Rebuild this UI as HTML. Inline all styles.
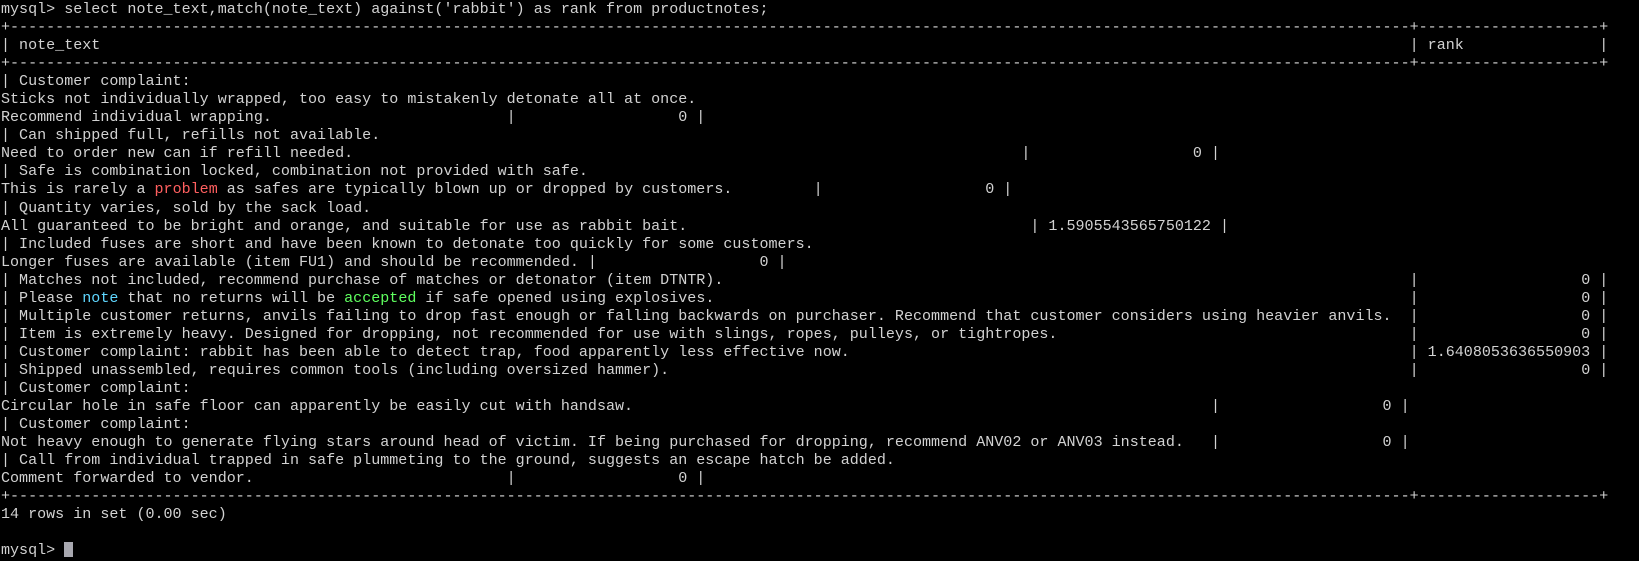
<!DOCTYPE html>
<html><head><meta charset="utf-8"><style>
html,body{margin:0;padding:0;background:#000;width:1639px;height:561px;overflow:hidden}
pre{position:absolute;left:1px;top:0px;margin:0;font-family:"Liberation Mono","DejaVu Sans Mono",monospace;font-size:15.05px;line-height:18.05px;color:#d2d2d2;white-space:pre}
.s{display:inline-block}
.r{color:#ff5f5f}.c{color:#5fd7ff}.g{color:#5fff5f}
.cur{display:inline-block;width:9px;height:15px;background:#a8a8b0;vertical-align:-3px}
</style></head><body><pre>mysql&gt; select note_text,match(note_text) against('rabbit') as rank from productnotes;
+-----------------------------------------------------------------------------------------------------------------------------------------------------------+--------------------+
| note_text<span class="s" style="width:144ch"></span> | rank<span class="s" style="width:14ch"></span> |
+-----------------------------------------------------------------------------------------------------------------------------------------------------------+--------------------+
| Customer complaint:
Sticks not individually wrapped, too easy to mistakenly detonate all at once.
Recommend individual wrapping.<span class="s" style="width:25ch"></span> | <span class="s" style="width:17ch"></span>0 |
| Can shipped full, refills not available.
Need to order new can if refill needed.<span class="s" style="width:73ch"></span> | <span class="s" style="width:17ch"></span>0 |
| Safe is combination locked, combination not provided with safe.
This is rarely a <span class="r">problem</span> as safes are typically blown up or dropped by customers.<span class="s" style="width:8ch"></span> | <span class="s" style="width:17ch"></span>0 |
| Quantity varies, sold by the sack load.
All guaranteed to be bright and orange, and suitable for use as rabbit bait.<span class="s" style="width:37ch"></span> | 1.5905543565750122 |
| Included fuses are short and have been known to detonate too quickly for some customers.
Longer fuses are available (item FU1) and should be recommended. | <span class="s" style="width:17ch"></span>0 |
| Matches not included, recommend purchase of matches or detonator (item DTNTR).<span class="s" style="width:75ch"></span> | <span class="s" style="width:17ch"></span>0 |
| Please <span class="c">note</span> that no returns will be <span class="g">accepted</span> if safe opened using explosives.<span class="s" style="width:76ch"></span> | <span class="s" style="width:17ch"></span>0 |
| Multiple customer returns, anvils failing to drop fast enough or falling backwards on purchaser. Recommend that customer considers using heavier anvils.<span class="s" style="width:1ch"></span> | <span class="s" style="width:17ch"></span>0 |
| Item is extremely heavy. Designed for dropping, not recommended for use with slings, ropes, pulleys, or tightropes.<span class="s" style="width:38ch"></span> | <span class="s" style="width:17ch"></span>0 |
| Customer complaint: rabbit has been able to detect trap, food apparently less effective now.<span class="s" style="width:61ch"></span> | 1.6408053636550903 |
| Shipped unassembled, requires common tools (including oversized hammer).<span class="s" style="width:81ch"></span> | <span class="s" style="width:17ch"></span>0 |
| Customer complaint:
Circular hole in safe floor can apparently be easily cut with handsaw.<span class="s" style="width:63ch"></span> | <span class="s" style="width:17ch"></span>0 |
| Customer complaint:
Not heavy enough to generate flying stars around head of victim. If being purchased for dropping, recommend ANV02 or ANV03 instead.<span class="s" style="width:2ch"></span> | <span class="s" style="width:17ch"></span>0 |
| Call from individual trapped in safe plummeting to the ground, suggests an escape hatch be added.
Comment forwarded to vendor.<span class="s" style="width:27ch"></span> | <span class="s" style="width:17ch"></span>0 |
+-----------------------------------------------------------------------------------------------------------------------------------------------------------+--------------------+
14 rows in set (0.00 sec)

mysql&gt; <span class="cur"></span></pre></body></html>
